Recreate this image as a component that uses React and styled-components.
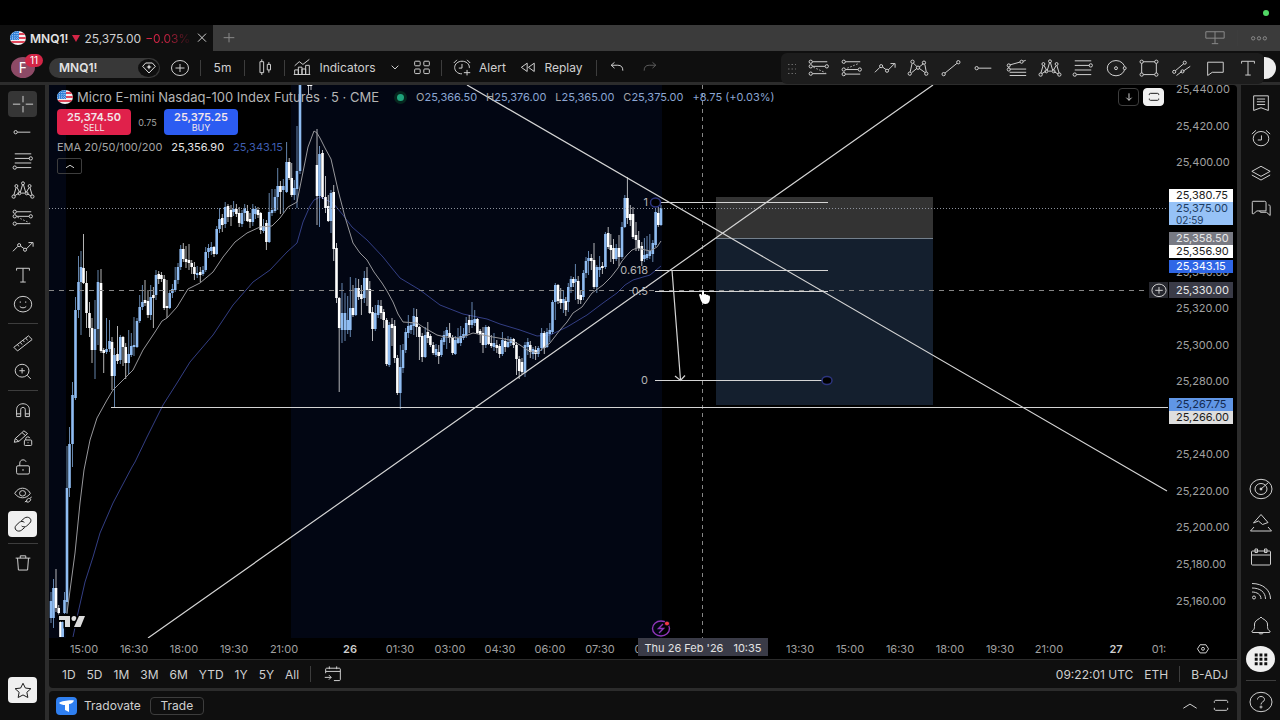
import React from "react";
import styled, { createGlobalStyle, css } from "styled-components";

/* price axis: 25,440 sits 4px under the top edge of the pane, 20 points are 36.5px */
const PANE_HEIGHT = 553;
const PANE_WIDTH = 1119;
const priceToTop = (price) => ((4 + ((25440 - price) * 511.5) / 280) / PANE_HEIGHT) * 100;
const barToLeft = (x) => ((x - 49) / PANE_WIDTH) * 100;

const TICKS = [25440, 25420, 25400, 25340, 25320, 25300, 25280, 25240, 25220, 25200, 25180, 25160];

const TIMES = [
    [84, "15:00"], [134, "16:30"], [184, "18:00"], [234, "19:30"], [284, "21:00"],
    [350, "26", true], [400, "01:30"], [450, "03:00"], [500, "04:30"], [550, "06:00"],
    [600, "07:30"], [650, "09:00"], [800, "13:30"], [850, "15:00"], [900, "16:30"],
    [950, "18:00"], [1000, "19:30"], [1049, "21:00"], [1116, "27", true], [1159, "01:"],
];

const RANGES = ["1D", "5D", "1M", "3M", "6M", "YTD", "1Y", "5Y", "All"];

/* x, high, body top, body bottom, low, up(1) or down(0) */
const CANDLES = [
    [51, 592, 601, 618, 623, 1], [53.5, 579, 588, 618, 628, 1], [56, 569, 588, 608, 612, 0],
    [58.7, 605, 608, 613, 616, 0], [60.5, 620, 622, 637, 637, 0], [62.7, 618, 622, 637, 637, 1],
    [64.5, 592, 600, 613, 614, 1], [67, 446, 488, 602, 614, 1], [69.5, 427, 444, 488, 497, 1],
    [72.5, 382, 395, 444, 467, 1], [75.5, 297, 310, 398, 400, 1], [78.5, 256, 282, 310, 318, 1],
    [81, 251, 267, 282, 335, 1], [83.5, 234, 268, 283, 284, 0], [86.5, 271, 283, 313, 328, 0],
    [89.5, 302, 313, 328, 337, 0], [92, 318, 328, 350, 363, 0], [95, 300, 329, 350, 379, 1],
    [98, 270, 282, 329, 345, 1], [101, 269, 283, 351, 353, 0], [103.7, 348, 350, 353, 373, 0],
    [106.5, 318, 349, 352, 354, 1], [109.5, 320, 341, 349, 352, 1], [112, 337, 342, 376, 390, 0],
    [114.5, 348, 355, 376, 408, 1], [117.5, 326, 354, 361, 364, 0], [120.3, 335, 337, 360, 364, 1],
    [123, 336, 337, 347, 366, 0], [125.7, 343, 347, 363, 379, 0], [128.7, 330, 354, 363, 374, 1],
    [131.3, 333, 346, 355, 357, 1], [134, 317, 345, 347, 356, 1], [137, 318, 321, 347, 348, 1],
    [139.7, 295, 307, 321, 323, 1], [142.4, 285, 302, 307, 310, 1], [145, 280, 300, 303, 306, 0],
    [148, 290, 301, 315, 318, 0], [150.7, 285, 297, 315, 320, 1], [153.4, 287, 295, 298, 328, 0],
    [156, 270, 275, 295, 300, 1], [158.7, 271, 274, 279, 284, 0], [161.4, 272, 275, 279, 282, 0],
    [164.2, 275, 279, 308, 310, 0], [167, 280, 306, 308, 318, 0], [169.7, 290, 293, 308, 309, 1],
    [172.4, 284, 289, 293, 298, 1], [175.2, 267, 280, 290, 292, 1], [178, 263, 267, 280, 284, 1],
    [180.7, 245, 249, 267, 270, 1], [183.3, 243, 249, 259, 262, 0], [186, 246, 259, 262, 268, 0],
    [189, 244, 260, 263, 270, 0], [191.7, 260, 263, 267, 274, 0], [194.4, 262, 267, 274, 280, 0],
    [197.2, 266, 273, 275, 278, 1], [200.3, 267, 272, 275, 282, 0], [203, 266, 270, 274, 276, 1],
    [205.7, 247, 252, 270, 272, 1], [208.5, 244, 248, 252, 258, 1], [211.3, 242, 247, 251, 255, 1],
    [214, 246, 247, 254, 257, 0], [216.7, 226, 229, 254, 255, 1], [219.5, 208, 219, 229, 233, 1],
    [222.3, 214, 218, 225, 232, 0], [225.2, 202, 207, 224, 228, 1], [228, 204, 206, 217, 222, 0],
    [231, 205, 210, 217, 226, 0], [233.6, 201, 209, 212, 216, 1], [236.4, 204, 209, 214, 217, 0],
    [239.2, 207, 213, 223, 227, 0], [242, 210, 213, 224, 227, 1], [244.7, 204, 208, 213, 221, 1],
    [247.4, 205, 211, 221, 222, 0], [250, 213, 219, 222, 228, 0], [252.8, 204, 209, 222, 226, 1],
    [255.4, 206, 209, 214, 219, 1], [258, 207, 210, 215, 218, 0], [260.7, 212, 213, 230, 234, 0],
    [263.5, 219, 226, 231, 233, 1], [266.4, 220, 223, 242, 250, 0], [269.2, 193, 212, 242, 243, 1],
    [272, 189, 210, 213, 216, 1], [275, 189, 197, 211, 213, 1], [277.7, 168, 186, 197, 210, 1],
    [280.4, 181, 186, 192, 214, 0], [283.3, 179, 186, 190, 213, 1], [286.6, 142, 162, 192, 193, 1],
    [289.2, 158, 162, 178, 180, 0], [291.7, 163, 178, 195, 197, 0], [294.3, 180, 188, 195, 200, 1],
    [297, 126, 171, 189, 208, 1], [300, 85, 85, 171, 174, 1], [308.5, 85, 85, 86, 95, 0],
    [311, 85, 85, 86, 90, 0], [317, 129, 165, 196, 225, 0], [319.5, 146, 154, 196, 227, 1],
    [322.5, 150, 153, 197, 199, 0], [325.5, 176, 197, 208, 213, 0], [328.3, 195, 206, 221, 222, 0],
    [331, 190, 193, 221, 233, 1], [333.7, 185, 192, 249, 261, 0], [336.5, 243, 248, 298, 303, 0],
    [339.2, 297, 298, 328, 392, 0], [342, 283, 313, 330, 343, 1], [345, 293, 313, 330, 341, 1],
    [347.7, 296, 320, 330, 334, 1], [350.3, 277, 308, 330, 337, 1], [353, 285, 308, 315, 317, 0],
    [355.8, 278, 288, 315, 316, 1], [358.6, 279, 288, 297, 300, 0], [361.4, 285, 294, 299, 315, 0],
    [364.3, 271, 278, 298, 303, 1], [367, 267, 278, 290, 306, 0], [369.8, 281, 289, 313, 314, 0],
    [372.5, 307, 312, 329, 341, 0], [375.3, 305, 313, 329, 331, 1], [378.2, 300, 305, 315, 318, 1],
    [381, 300, 306, 313, 319, 0], [383.7, 309, 312, 320, 328, 0], [386.6, 318, 320, 364, 366, 0],
    [389.2, 322, 325, 365, 367, 1], [392, 318, 324, 328, 346, 0], [394.7, 320, 326, 358, 363, 0],
    [397.4, 355, 358, 393, 395, 0], [400.3, 345, 367, 393, 409, 1], [403, 344, 350, 368, 373, 1],
    [405.7, 328, 332, 350, 353, 1], [408.3, 315, 326, 333, 338, 1], [411, 322, 325, 330, 334, 1],
    [413.8, 308, 316, 326, 335, 1], [416.6, 309, 317, 327, 337, 0], [419.4, 326, 327, 337, 360, 0],
    [422.2, 333, 336, 357, 362, 0], [425.2, 327, 335, 357, 358, 1], [427.8, 322, 332, 338, 343, 0],
    [430.4, 334, 336, 345, 347, 0], [433.2, 342, 345, 353, 355, 0], [436, 344, 349, 355, 357, 1],
    [438.7, 345, 352, 356, 364, 0], [441.4, 338, 340, 355, 357, 1], [444, 331, 335, 342, 345, 1],
    [446.7, 327, 330, 336, 349, 1], [449.6, 323, 333, 338, 343, 0], [452.6, 335, 337, 353, 355, 0],
    [455.3, 336, 340, 354, 355, 1], [458, 328, 338, 343, 344, 1], [460.7, 326, 336, 343, 346, 1],
    [463.5, 328, 334, 338, 340, 1], [466.2, 317, 323, 336, 338, 1], [469.2, 315, 320, 325, 333, 0],
    [472, 302, 320, 325, 328, 1], [474.7, 310, 319, 323, 326, 1], [477.4, 318, 319, 333, 334, 0],
    [480.2, 329, 331, 335, 343, 0], [483, 327, 333, 345, 353, 0], [485.8, 325, 327, 345, 348, 1],
    [488.6, 326, 327, 344, 345, 0], [491.3, 335, 343, 346, 348, 0], [494, 333, 343, 347, 351, 1],
    [496.8, 340, 345, 348, 353, 0], [499.6, 344, 346, 354, 358, 0], [502.4, 332, 340, 354, 356, 1],
    [505.2, 338, 341, 347, 352, 0], [508, 336, 342, 347, 348, 1], [510.8, 337, 339, 343, 346, 1],
    [513.6, 338, 339, 345, 348, 0], [516.5, 342, 345, 359, 375, 0], [519.2, 356, 359, 371, 379, 0],
    [522, 358, 362, 372, 374, 0], [525, 342, 345, 373, 377, 1], [527.8, 338, 342, 347, 355, 1],
    [530.3, 341, 345, 352, 358, 0], [533, 347, 349, 354, 359, 1], [535.6, 346, 350, 354, 360, 0],
    [538.3, 346, 348, 354, 357, 1], [541.6, 328, 333, 348, 351, 1], [544.3, 331, 333, 348, 354, 0],
    [547, 328, 332, 347, 348, 1], [549.8, 323, 330, 334, 342, 1], [552.5, 300, 302, 332, 334, 1],
    [555.3, 283, 285, 302, 320, 1], [558, 284, 285, 301, 304, 0], [560.7, 288, 299, 303, 309, 0],
    [563.4, 291, 299, 303, 313, 1], [565.8, 297, 301, 310, 316, 0], [568.3, 283, 287, 302, 312, 1],
    [571, 276, 279, 287, 293, 1], [573.4, 277, 279, 283, 287, 0], [575.4, 264, 279, 282, 300, 1],
    [578.2, 276, 281, 299, 304, 0], [580.7, 290, 295, 300, 304, 0], [583.4, 270, 273, 297, 300, 1],
    [586, 257, 261, 273, 278, 1], [588.5, 251, 258, 261, 275, 1], [591.3, 254, 258, 261, 270, 0],
    [594, 243, 260, 287, 289, 0], [596.8, 265, 267, 287, 293, 1], [599.6, 256, 267, 270, 277, 1],
    [602.4, 262, 266, 268, 274, 0], [605.4, 232, 234, 267, 269, 1], [608.2, 227, 233, 247, 249, 0],
    [610.8, 234, 245, 250, 262, 0], [613.5, 239, 248, 259, 264, 0], [616.2, 244, 248, 259, 261, 1],
    [619, 235, 248, 257, 266, 0], [622, 222, 227, 257, 259, 1], [624.8, 195, 198, 227, 228, 1],
    [627.4, 177, 198, 218, 224, 0], [630.3, 205, 214, 220, 226, 0], [633, 207, 214, 237, 239, 0],
    [636, 222, 235, 240, 251, 0], [638.7, 231, 240, 248, 251, 0], [641.8, 242, 246, 261, 266, 0],
    [644.4, 238, 255, 259, 262, 1], [647, 236, 254, 258, 260, 1], [649.8, 234, 251, 256, 259, 1],
    [652.8, 240, 243, 254, 262, 1], [655.6, 209, 212, 245, 247, 1], [658.3, 206, 213, 225, 227, 0],
    [661, 205, 208, 225, 226, 1],
];

const EMA_FAST = "67,613 71,583 75,553 80,503 84,470 90,440 97,418 107,400 113,390 133,370 143,350 155,332 162,321 167,318 177,307 188,289 200,283 213,272 223,257 235,242 247,233 260,227 272,226 280,218 288,207 297,202 302,177 308,147 314,131 317,133 320,138 325,148 331,159 338,190 345,217 353,243 360,253 367,260 374,272 382,283 387,291 393,302 398,314 403,322 417,323 423,327 437,335 445,337 460,338 473,333 483,335 493,337 510,340 520,345 527,350 537,353 550,343 560,330 567,322 573,313 582,307 592,293 603,285 611,277 618,268 622,261 627,255 632,250 637,248 650,251 657,247 661,241";
const EMA_SLOW = "73,637 78,613 85,582 93,557 100,533 113,503 132,467 135,462 147,437 163,405 177,383 190,362 213,335 233,305 253,282 270,270 287,252 297,243 303,222 310,206 314,200 320,197 333,203 343,215 352,227 367,240 383,257 391,267 400,278 420,290 440,305 463,314 487,319 500,324 520,330 537,336 550,335 567,327 587,315 603,303 617,293 625,285 633,280 650,275 661,266";

/* rail and toolbar drawings, all on a 24 x 20 grid */
const ICONS = {
    cross: <path d="M12 1v7M12 12v7M1 10h8M15 10h8" />,
    hline: <><circle cx="4" cy="10" r="1.8" /><path d="M6 10h14" /></>,
    fib: <><path d="M3 2h18M3 7h16M3 12h18M5 17h16" /><circle cx="20.500" cy="7" r="1.8" /><circle cx="3" cy="17" r="1.8" /></>,
    pattern: <><path d="M2 15.500L4.500 7M5.500 7l3 5.500M9 12.500L11.500 4M12.500 4L15 12.500M15.500 12.500l3-5M19.500 7l2.500 8.500M3 16l5-3M10 13.200h4M16 13.500l5 3" /><circle cx="1.800" cy="17" r="1.800" /><circle cx="4.800" cy="5.500" r="1.600" /><circle cx="8" cy="13.500" r="1.600" /><circle cx="12" cy="2.500" r="1.600" /><circle cx="16" cy="13.500" r="1.600" /><circle cx="19.200" cy="5.500" r="1.600" /><circle cx="22.200" cy="17" r="1.800" /></>,
    short: <><path d="M5 3h16M5 8h13.500M5 16h15" /><path d="M6 9l13 6" strokeDasharray="1.500 2" /><circle cx="3" cy="3" r="1.800" /><circle cx="3" cy="8" r="1.800" /><circle cx="20.500" cy="8" r="1.800" /><circle cx="3" cy="16" r="1.800" /></>,
    long: <><path d="M5 3h16M5 11.500h13.500M5 16.500h16" /><path d="M7 10l12-5" strokeDasharray="1.500 2" /><circle cx="3" cy="3" r="1.800" /><circle cx="3" cy="11.500" r="1.800" /><circle cx="20.500" cy="11.500" r="1.800" /><circle cx="3" cy="16.500" r="1.800" /></>,
    trend: <><path d="M1 14.500L6.500 9M9 8.500l4 3M15.500 12L22 5.500M18 5h5v4.500" /><circle cx="7.800" cy="7.800" r="1.700" /><circle cx="14.200" cy="12.800" r="1.700" /></>,
    text: <path d="M5 5V2.500h14V5M12 2.500v15M9 17.500h6" />,
    smile: <><ellipse cx="12" cy="10" rx="9.500" ry="8.500" /><path d="M8.500 12.500c1.500 2 5.500 2 7 0M9 7v1.500M15 7v1.500" /></>,
    ruler: <path d="M2 14.500L18 2l4 4L6 18.500zM6 11.500l1.500 2M9 9l2 2.500M12 6.800l1.500 2M15 4.500L17 7" />,
    zoom: <><ellipse cx="11" cy="9.500" rx="7.500" ry="7" /><path d="M16.500 14.500l4 4M11 6.500v6M8 9.500h6" /></>,
    magnet: <path d="M5 16V9.500C5 5.500 8 3 12 3s7 2.500 7 6.500V17h-4.500V9.500c0-1.500-1-2.500-2.500-2.500s-2.500 1-2.500 2.500V17H5zM5 14h4.500M14.500 14H19" />,
    pencil: <><path d="M2.500 14.500l1-4L13 2l4 3-9.500 8.500zM3.500 10.500l4 3M11 4l3.500 3" /><rect x="13.500" y="12" width="8" height="6" rx="1" /><path d="M15 12v-1.500a2.300 2 0 0 1 4.500-.5M17.500 14.500v1" /></>,
    lock: <><rect x="5" y="8.500" width="14" height="9" rx="1.500" /><path d="M8.500 8.500V5.500C8.500 3.500 10 2 12 2c1.500 0 2.800.8 3.300 2M12 12v2" /></>,
    eye: <><path d="M3 8c4-7.500 13-7.500 17 0-4 6.500-13 6.500-17 0z" /><ellipse cx="11.500" cy="8" rx="3.300" ry="3" /><path d="M14 17.500l2-1.500M16 15l2-1.500c2 0 3 1 2 2.500l-2 1.500h-2zM19.500 13.500l2-1.500" /></>,
    link: <path d="M10 6.500l3.500-3c2-1.600 4.500-1.300 6 0s1.500 3.800 0 5.200L16 12c-1.700 1.300-4 1.300-5.500 0M14 13.500l-3.500 3c-2 1.600-4.500 1.300-6 0s-1.500-3.800 0-5.200L8 8c1.700-1.300 4-1.300 5.500 0" />,
    trash: <path d="M4 4.500h16M9 4.500V2h6v2.500M6 4.500l1 13h10l1-13" />,
    star: <path d="M12 2.500l2.600 5.200 6 .7-4.400 3.900 1.100 5.700-5.300-2.800L6.700 18l1.100-5.700-4.400-3.900 6-.7z" />,
    xabcd: <><path d="M3.500 14L5.500 5M7 4.500l4 4M13 9l5-4M19.500 6l1.500 8M5 15l6-5M13 10l7 5" /><circle cx="3" cy="16" r="1.800" /><circle cx="6" cy="3" r="1.800" /><circle cx="12" cy="9.500" r="1.800" /><circle cx="18.500" cy="4" r="1.800" /><circle cx="21" cy="16" r="1.800" /></>,
    line: <><circle cx="4" cy="16.500" r="1.800" /><circle cx="20" cy="3.500" r="1.800" /><path d="M5.500 15.300L18.500 4.700" /></>,
    fan: <><path d="M4 6.500L15.500 3.300M18.500 2.500l3-1M4 11h18M4 14.500h18M4 18h18M3 8.500v1.500" /><circle cx="3" cy="7" r="1.700" /><circle cx="17" cy="3" r="1.700" /><circle cx="3" cy="11.500" r="1.700" /></>,
    circle: <><ellipse cx="12" cy="10" rx="9.500" ry="8.300" /><circle cx="12" cy="10" r="1.600" /><circle cx="21.500" cy="10" r="1.600" fill="#1c1c1c" /></>,
    rect: <><rect x="4" y="3" width="16" height="14" /><g fill="#1c1c1c"><circle cx="4" cy="3" r="1.800" /><circle cx="20" cy="3" r="1.800" /><circle cx="4" cy="17" r="1.800" /><circle cx="20" cy="17" r="1.800" /></g></>,
    channel: <><path d="M4.500 13L14 5M13 13.500L21 8M6 18l6-4.500" /><circle cx="3.500" cy="14" r="1.700" /><circle cx="15" cy="4" r="1.700" /><circle cx="12.500" cy="13.500" r="1.700" /></>,
    bubble: <path d="M4 3.500h17v11H9l-5 3.500z" />,
    plusCircle: <><ellipse cx="12" cy="10" rx="8.500" ry="7.500" /><path d="M12 6v8M7.500 10h9" /></>,
    candles: <path d="M6.500 4h4v12h-4zM8.500 1.500V4M8.500 16v2.500M14.500 7h3.500v6h-3.500zM16.200 4.500V7M16.200 13v3" />,
    indicators: <path d="M4 18v-5h4v5M8 18V10h4v8M12 18v-6h4v6M16 18V8h4v10M3 18h18M4 8.500l5-4.500 4 3 7-5.500" />,
    grid4: <><rect x="4" y="3.500" width="6" height="5" rx="1" /><rect x="14" y="3.500" width="6" height="5" rx="1" /><rect x="4" y="12" width="6" height="5" rx="1" /><rect x="14" y="12" width="6" height="5" rx="1" /></>,
    alert: <path d="M12 17.300C7 17.300 4 14 4 10.300S7.500 3.500 12 3.500s8 3 8 6.500v1M3 5.500l3.500-3.500M17.500 2L21 5.500M12 6.500v4.500H8.500M17.500 13v6M14 16h7" />,
    replay: <path d="M11 5v10l-7-5zM19.500 5v10l-7-5z" />,
    undo: <path d="M9 4L5 7.500l4 3.500M5 7.500h8c4 0 6 2 6 6.500" />,
    redo: <path d="M15 4l4 3.500-4 3.500M19 7.500h-8c-4 0-6 2-6 6.500" />,
    chevron: <path d="M8 8l4 4 4-4" />,
    up: <path d="M4 13.500l8-5 8 5" />,
    frame: <path d="M4 7V5.500C4 4.500 5 4 6 4h12c1 0 2 .5 2 1.500V7M4 13v1.500C4 15.500 5 16 6 16h12c1 0 2-.5 2-1.500V13" />,
    goTo: <path d="M4 9V4.500C4 4 4.500 3.500 5 3.500h14c.5 0 1 .5 1 1V16c0 .500-.5 1-1 1h-6M4 7h16M8 1.500v3M16 1.500v3M3 13.500h7M7.500 11l2.500 2.500L7.500 16" />,
    list: <path d="M4 2h16v16l-8-3-8 3zM7.500 5.500h9M7.500 8.500h9M7.500 11.500h9" />,
    clock: <><ellipse cx="12" cy="10.500" rx="8.500" ry="7.800" /><path d="M2 5.500L6.500 1.500M17.500 1.500L22 5.500M12.500 7v5H8.500" /></>,
    layers: <path d="M12 2.500l10 5.500-10 5.500L2 8zM2 12l10 5.500L22 12" />,
    chat: <path d="M3 2.500h13c1 0 1.500.5 1.500 1.500v9h-10L4 16H2.500V4c0-1 0-1.500.5-1.500zM20 6.500c1.500 0 2 .5 2 1.500v10l-4-3.500h-6c-1 0-1.500-.5-1.500-1.500" />,
    radar: <><ellipse cx="12" cy="10" rx="11" ry="9.700" /><ellipse cx="12" cy="10" rx="6" ry="5.500" /><path d="M12 10l7.500-6.500" /><circle cx="12" cy="10" r="1" fill="#dbdbdb" /></>,
    mountain: <path d="M5 14l-3.500 4h21L19 14M12 1.500L4.500 10l5-2 4 3.500 5.500-2z" />,
    calendar: <path d="M3.500 4h17c.7 0 1 .4 1 1v12c0 .6-.3 1-1 1h-17c-.7 0-1-.4-1-1V5c0-.6.3-1 1-1zM2.500 8h19M6 2h2.500v3.500H6zM15.500 2H18v3.500h-2.500z" />,
    rss: <><path d="M3 2.500C14 2.500 21.500 9 21.500 18M3 7c8 0 13.500 4 13.500 11M3 11c5 0 9 2.500 9 7" /><circle cx="5" cy="16.500" r="1.500" /></>,
    bell: <path d="M4 15.500c1-1 1.500-2 1.500-4V9c0-2.500 3-4.500 5-5.500L12 2l1.500 1.500c2 1 5 3 5 5.500v2.500c0 2 .5 3 1.500 4 1.500.5 1.500 2 0 2H4c-1.500 0-1.500-1.500 0-2zM9.500 17.800c.8 1.500 4.200 1.500 5 0" />,
    dots9: <g fill="#0f0f0f" stroke="none"><path d="M4.500 3h3.500v3.500H4.500zM10.200 3h3.500v3.500h-3.500zM16 3h3.500v3.500H16zM4.500 8.200h3.500v3.500H4.500zM10.200 8.200h3.500v3.500h-3.500zM16 8.200h3.500v3.500H16zM4.500 13.500h3.500V17H4.500zM10.200 13.500h3.500V17h-3.500zM16 13.500h3.500V17H16z" /></g>,
    help: <><ellipse cx="12" cy="10" rx="11" ry="9.700" /><path d="M8.500 7.500c0-4 7-4 7 0 0 2.500-3.500 2-3.500 5" /><circle cx="12" cy="15" r="1" /></>,
    down: <path d="M12 4v12M7.500 11.500L12 16l4.500-4.500" />,
    diamond: <><path d="M2.500 8L7 3h10l4.500 5L12 18z" /><path d="M12 5l1.300 2.700L16 9l-2.700 1.300L12 13l-1.300-2.700L8 9l2.700-1.300z" fill="#dbdbdb" stroke="none" /></>,
    hex: <><path d="M7 3h10l4.500 7-4.500 7H7l-4.500-7z" /><circle cx="12" cy="10" r="2.500" /></>,
    close: <path d="M6 4l12 12M18 4L6 16" />,
    plus: <path d="M12 3v14M4 10h16" />,
    layout: <path d="M2 3h20v7H2zM12 3v13M8.500 16h7" />,
    more: <><circle cx="5" cy="10" r="2" /><circle cx="12" cy="10" r="2" /><circle cx="19" cy="10" r="2" /></>,
};

const LEFT_TOOLS = [
    ["cross", "hline", "fib", "pattern", "short", "trend", "text", "smile"],
    ["ruler", "zoom"],
    ["magnet", "pencil", "lock", "eye", "link"],
];
const LEFT_HEIGHTS = [226, 54, 140];

const FAVORITES = ["short", "long", "trend", "xabcd", "line", "hline", "fan", "pattern", "fib", "circle", "rect", "channel", "bubble", "text"];

const Icon = ({ name, size = 22 }) => (
    <IconSvg viewBox="0 0 24 20" $size={size} aria-hidden="true">{ICONS[name]}</IconSvg>
);

const Flag = () => (
    <FlagSvg viewBox="0 0 16 14" aria-hidden="true">
        <clipPath id="flag"><ellipse cx="8" cy="7" rx="8" ry="7" /></clipPath>
        <g clipPath="url(#flag)">
            <rect width="16" height="14" fill="#f3f3f3" />
            <path d="M8 2h8v2H8zM8 6h8v2H8zM0 10h16v2H0z" fill="#e0465a" />
            <rect width="9" height="9" fill="#2f7fd6" />
            <path d="M0 2.500h9M0 5h9M0 7.500h9M2.500 0v9M5 0v9M7.500 0v9" stroke="#a9cdf3" strokeWidth=".7" strokeDasharray="1 1" />
        </g>
    </FlagSvg>
);

const Chart = () => (
    <ChartSvg viewBox="49 85 1119 553" preserveAspectRatio="none" role="img" aria-label="MNQ1! 5 minute chart">
        <rect x="49" y="85" width="17" height="553" fill="#020613" />
        <rect x="291" y="85" width="371" height="553" fill="#020613" />
        <rect x="716" y="197" width="217" height="41" fill="#333333" />
        <rect x="716" y="238" width="217" height="167" fill="#141f2e" />
        <path d="M716 238.500h217" stroke="#74808c" />

        <polyline points={EMA_SLOW} fill="none" stroke="#333e84" />
        {CANDLES.map(([x, high, top, bottom, low, up]) => (
            <g key={x} fill={up ? "#8fbcf2" : "#ffffff"}>
                <rect x={x - 0.5} y={high} width="1" height={low - high} opacity=".7" />
                <rect x={x - 1.3} y={top} width="2.600" height={bottom - top} />
            </g>
        ))}
        <polyline points={EMA_FAST} fill="none" stroke="#97979b" />

        <path d="M49 208.500H1168" stroke="#8d929c" strokeDasharray="1 2" />
        <path d="M49 290.500H1168" stroke="#868686" strokeDasharray="5 5" />
        <path d="M702.500 85V638" stroke="#868686" strokeDasharray="4 4" />

        <g stroke="#d4d4d4" strokeWidth="1.200" fill="none">
            <path d="M111 407.500H1168" />
            <path d="M148 638L933 85M467 85L1167 491" />
            <path d="M655 202.500h173M655 270.500h173M655 291.500h173M655 380.500h173" />
            <path d="M672 270l8.500 110M675 376l5.500 4.500 4.500-5" />
        </g>
        <g fill="#000" stroke="#2d357f" strokeWidth="1.500">
            <ellipse cx="655.500" cy="202.500" rx="5" ry="4.500" />
            <ellipse cx="827" cy="380.500" rx="5" ry="4" />
        </g>
        <FibText x="648" y="206">1</FibText>
        <FibText x="648" y="274">0.618</FibText>
        <FibText x="648" y="295">0.5</FibText>
        <FibText x="648" y="384">0</FibText>

        <path d="M699 294.500c1-1 2.500-.5 3 1v-4c0-1.500 2-1.500 2 0v3c1-.7 2-.4 2.300.4 1-.5 1.800 0 2 .7 1-.3 1.700.3 1.700 1.500 0 4-1 6.900-4.500 6.900-3 0-4-2-5-4.500z" fill="#fff" />
        <g fill="none" stroke="#8e35b8" strokeWidth="1.400">
            <ellipse cx="661" cy="628.500" rx="8.500" ry="7.500" />
            <path d="M663 624l-4.500 4.500h5l-4.500 4.500" />
        </g>
        <circle cx="667" cy="623.500" r="2.500" fill="#f23645" stroke="#020613" />
        <g fill="#dcdcdc" stroke="#000" strokeWidth="3" paintOrder="stroke">
            <path d="M59 616h11v11h-5v-7h-6z" />
            <circle cx="74" cy="618.500" r="2.500" />
            <path d="M79 616h6l-4.500 11H74z" />
        </g>
    </ChartSvg>
);

const App = () => (
    <Page>
        <Global />
        <MenuStrip><CameraDot /></MenuStrip>

        <TabBar>
            <Tab>
                <Flag />
                <TabName>MNQ1!</TabName>
                <DownMark viewBox="0 0 8 7" aria-hidden="true"><path d="M0 0h8L4 7z" fill="#d32546" /></DownMark>
                <span>25,375.00</span>
                <TabChange>−0.03%</TabChange>
                <PlainButton aria-label="Close tab"><Icon name="close" size={16} /></PlainButton>
            </Tab>
            <PlainButton $dim aria-label="New tab"><Icon name="plus" size={16} /></PlainButton>
            <Spacer />
            <TabActions>
                <PlainButton $dim aria-label="Layout"><Icon name="layout" /></PlainButton>
                <Divider />
                <PlainButton $dim aria-label="More"><Icon name="more" size={20} /></PlainButton>
            </TabActions>
        </TabBar>

        <Toolbar>
            <Avatar type="button">F<Badge>11</Badge></Avatar>
            <SymbolButton type="button">MNQ1!<Gem><Icon name="diamond" size={16} /></Gem></SymbolButton>
            <ToolButton $w={40} aria-label="Compare"><Icon name="plusCircle" size={24} /></ToolButton>
            <Divider />
            <ToolButton $w={43}>5m</ToolButton>
            <Divider />
            <ToolButton $w={39} aria-label="Bar style"><Icon name="candles" /></ToolButton>
            <Divider />
            <ToolButton $w={97}><Icon name="indicators" />Indicators</ToolButton>
            <ToolButton $w={26} aria-label="Favorite indicators"><Icon name="chevron" size={20} /></ToolButton>
            <ToolButton $w={28} aria-label="Templates"><Icon name="grid4" /></ToolButton>
            <Divider $gap={5} />
            <ToolButton $w={63}><Icon name="alert" />Alert</ToolButton>
            <ToolButton $w={81}><Icon name="replay" size={20} />Replay</ToolButton>
            <Divider $gap={5} />
            <ToolButton $w={30} aria-label="Undo"><Icon name="undo" size={20} /></ToolButton>
            <ToolButton $w={36} $dim aria-label="Redo"><Icon name="redo" size={20} /></ToolButton>
            <Spacer />
            <Favorites>
                <Grip viewBox="0 0 8 10" aria-hidden="true"><path d="M0 .5h8M0 5h8M0 9.500h8" stroke="#6b6b6b" strokeDasharray="1.500 2" /></Grip>
                {FAVORITES.map((name) => (
                    <FavButton key={name} aria-label={name}><Icon name={name} /></FavButton>
                ))}
            </Favorites>
            <Publish aria-label="Publish" />
        </Toolbar>

        <Body>
            <LeftRail>
                {LEFT_TOOLS.map((group, i) => (
                    <React.Fragment key={group[0]}>
                        <RailGroup $h={LEFT_HEIGHTS[i]}>
                            {group.map((name) => (
                                <RailButton key={name} aria-label={name} $soft={name === "cross"} $lit={name === "link"}>
                                    <Icon name={name} />
                                </RailButton>
                            ))}
                        </RailGroup>
                        <RailLine />
                    </React.Fragment>
                ))}
                <RailButton aria-label="Remove"><Icon name="trash" /></RailButton>
                <Spacer />
                <RailButton $lit aria-label="Favorites"><Icon name="star" /></RailButton>
            </LeftRail>

            <Center>
                <ChartPanel>
                    <Pane>
                        <Chart />
                        <Legend>
                            <LegendRow>
                                <Flag />
                                <Title>Micro E-mini Nasdaq-100 Index Futures · 5 · CME</Title>
                                <MarketDot />
                                <Ohlc>
                                    <span><i>O</i>25,366.50</span>
                                    <span><i>H</i>25,376.00</span>
                                    <span><i>L</i>25,365.00</span>
                                    <span><i>C</i>25,375.00</span>
                                    <span>+8.75 (+0.03%)</span>
                                </Ohlc>
                            </LegendRow>
                            <OrderRow>
                                <OrderButton $color="#e0214b"><b>25,374.50</b>SELL</OrderButton>
                                <Spread>0.75</Spread>
                                <OrderButton $color="#2c5cf2"><b>25,375.25</b>BUY</OrderButton>
                            </OrderRow>
                            <EmaRow>
                                <span>EMA 20/50/100/200</span>
                                <EmaValue $color="#e6e6e6">25,356.90</EmaValue>
                                <EmaValue $color="#3f5eb0">25,343.15</EmaValue>
                            </EmaRow>
                            <Collapse aria-label="Collapse legend"><Icon name="up" size={12} /></Collapse>
                        </Legend>
                        <PaneButtons>
                            <PaneButton aria-label="Scroll down"><Icon name="down" size={14} /></PaneButton>
                            <PaneButton $lit aria-label="Fit"><Icon name="frame" size={14} /></PaneButton>
                        </PaneButtons>
                        <AddMark type="button" aria-label="Add at price" style={{ top: `${priceToTop(25330)}%` }}>
                            <Icon name="plusCircle" size={20} />
                        </AddMark>
                    </Pane>

                    <PriceAxis>
                        {TICKS.map((price) => (
                            <Tick key={price} style={{ top: `${priceToTop(price)}%` }}>
                                {price.toLocaleString("en-US", { minimumFractionDigits: 2 })}
                            </Tick>
                        ))}
                        <TagStack style={{ top: `${priceToTop(25385.2)}%` }}>
                            <Tag $bg="#ffffff" $fg="#1b1b1b">25,380.75</Tag>
                            <Tag $bg="#96c2f7" $fg="#1d3c63">25,375.00<small>02:59</small></Tag>
                        </TagStack>
                        <TagStack style={{ top: `${priceToTop(25361.8)}%` }}>
                            <Tag $bg="#787a83" $fg="#e8e8e8">25,358.50</Tag>
                            <Tag $bg="#ffffff" $fg="#1b1b1b">25,356.90</Tag>
                        </TagStack>
                        <TagStack style={{ top: `${priceToTop(25346.4)}%` }}>
                            <Tag $bg="#2f66e6" $fg="#ffffff">25,343.15</Tag>
                        </TagStack>
                        <TagStack style={{ top: `${priceToTop(25334.2)}%` }}>
                            <Tag $bg="#3a3b47" $fg="#e8e8e8" $tall>25,330.00</Tag>
                        </TagStack>
                        <TagStack style={{ top: `${priceToTop(25270.9)}%` }}>
                            <Tag $bg="#6096e6" $fg="#132a52">25,267.75</Tag>
                            <Tag $bg="#dedede" $fg="#1b1b1b">25,266.00</Tag>
                        </TagStack>
                    </PriceAxis>

                    <TimeAxis>
                        {TIMES.map(([x, label, day]) => (
                            <TimeLabel key={x} $day={day} style={{ left: `${barToLeft(x)}%` }}>{label}</TimeLabel>
                        ))}
                        <CursorTime style={{ left: `${barToLeft(703)}%` }}><span>Thu 26 Feb '26</span><span>10:35</span></CursorTime>
                    </TimeAxis>
                    <AxisCorner>
                        <PlainButton aria-label="Axis settings"><Icon name="hex" size={14} /></PlainButton>
                    </AxisCorner>
                </ChartPanel>

                <RangeBar>
                    {RANGES.map((range) => <RangeButton key={range}>{range}</RangeButton>)}
                    <Divider />
                    <PlainButton aria-label="Go to date"><Icon name="goTo" /></PlainButton>
                    <Spacer />
                    <RangeButton>09:22:01 UTC</RangeButton>
                    <RangeButton>ETH</RangeButton>
                    <Divider />
                    <RangeButton>B-ADJ</RangeButton>
                </RangeBar>

                <BrokerBar>
                    <BrokerLogo viewBox="0 0 21 18" aria-hidden="true">
                        <rect width="21" height="18" rx="4" fill="#2f7ff0" />
                        <path d="M3 6c3-2 10-3 15-2.500-1 2-2.500 3.500-5 3.500V15L9 13V8C7 8 4.500 7.500 3 6z" fill="#fff" />
                    </BrokerLogo>
                    <span>Tradovate</span>
                    <TradeButton>Trade</TradeButton>
                    <Spacer />
                    <PlainButton aria-label="Open panel"><Icon name="up" size={20} /></PlainButton>
                    <PlainButton aria-label="Maximize panel"><Icon name="frame" size={20} /></PlainButton>
                </BrokerBar>
            </Center>

            <RightRail>
                {["list", "clock", "layers", "chat"].map((name) => (
                    <RailButton key={name} aria-label={name}><Icon name={name} /></RailButton>
                ))}
                <Spacer />
                <RightLower>
                    {["radar", "mountain", "calendar", "rss", "bell"].map((name) => (
                        <RailButton key={name} aria-label={name}><Icon name={name} size={24} /></RailButton>
                    ))}
                    <RailButton $lit $round aria-label="Apps"><Icon name="dots9" size={20} /></RailButton>
                </RightLower>
                <RailLine />
                <RailButton aria-label="Help"><Icon name="help" size={24} /></RailButton>
            </RightRail>
        </Body>
    </Page>
);

export default App;


const Global = createGlobalStyle`
    * {
        box-sizing: border-box;
    }
    body {
        margin: 0;
        background: #000;
        color: #cfcfcf;
        font-family: Inter, "Liberation Sans", sans-serif;
    }
    button {
        font: inherit;
        color: inherit;
        background: none;
        border: 0;
        padding: 0;
        cursor: pointer;
    }
`

const Page = styled.div`
    min-height: 100vh;
    display: flex;
    flex-direction: column;
    background: #0f0f0f;
    overflow: hidden;
`

const Spacer = styled.div`
    flex: 1;
`

const IconSvg = styled.svg`
    width: ${(p) => p.$size}px;
    aspect-ratio: 24 / 20;
    flex: none;
    fill: none;
    stroke: currentColor;
    stroke-width: ${(p) => 24 / p.$size}px;
    overflow: visible;
`

const FlagSvg = styled.svg`
    width: 16px;
    height: 14px;
    flex: none;
`

const Divider = styled.div`
    width: 1px;
    height: 16px;
    flex: none;
    margin: 0 ${(p) => p.$gap || 0}px;
    background: #3d3d3d;
`

const PlainButton = styled.button`
    display: flex;
    align-items: center;
    color: ${(p) => (p.$dim ? "#8a8a8a" : "#cfcfcf")};
`

const MenuStrip = styled.div`
    height: 25px;
    background: #000;
    display: flex;
    align-items: center;
    justify-content: flex-end;
    padding-right: 11px;
`

const CameraDot = styled.span`
    width: 6px;
    height: 6px;
    border-radius: 50%;
    background: #51d865;
`

const TabBar = styled.div`
    height: 26px;
    display: flex;
    align-items: center;
    background: #3b3b3b;
`

const Tab = styled.div`
    width: 213px;
    height: 26px;
    padding: 0 4px 0 10px;
    margin-right: 8px;
    display: flex;
    align-items: center;
    gap: 4px;
    background: #0f0f0f;
    font-size: 12px;
    white-space: nowrap;
    flex: none;

    button {
        margin-left: auto;
    }
`

const TabName = styled.strong`
    font-weight: 600;
    color: #e3e3e3;
`

const DownMark = styled.svg`
    width: 8px;
    height: 7px;
    flex: none;
`

const TabChange = styled.span`
    color: transparent;
    background: linear-gradient(90deg, #d32546 40%, #2b1015);
    background-clip: text;
`

const TabActions = styled.div`
    display: flex;
    align-items: center;
    gap: 11px;
    padding-right: 11px;
`

const Toolbar = styled.div`
    height: 34px;
    padding-left: 11px;
    display: flex;
    align-items: center;
    border-bottom: 3px solid #2c2c2c;
    padding-top: 2px;
    font-size: 12px;
    flex: none;
`

const Avatar = styled.button`
    position: relative;
    width: 24px;
    height: 21px;
    margin-right: 14px;
    border-radius: 50%;
    background: #8d4a66;
    color: #fff;
    font-size: 14px;
    line-height: 20px;
    flex: none;
`

const Badge = styled.span`
    position: absolute;
    left: 14px;
    top: -3px;
    width: 18px;
    height: 13px;
    border-radius: 7px;
    background: #d32546;
    font-size: 10px;
    line-height: 13px;
`

const SymbolButton = styled.button`
    width: 111px;
    height: 20px;
    padding: 0 1px 0 10px;
    display: flex;
    align-items: center;
    justify-content: space-between;
    border-radius: 10px;
    background: #383838;
    font-weight: 600;
    color: #e3e3e3;
    flex: none;
`

const Gem = styled.span`
    width: 21px;
    height: 18px;
    display: grid;
    place-items: center;
    border-radius: 50%;
    background: #0f0f0f;
`

const ToolButton = styled.button`
    width: ${(p) => p.$w}px;
    height: 26px;
    display: flex;
    align-items: center;
    justify-content: center;
    gap: 6px;
    flex: none;
    color: ${(p) => (p.$dim ? "#5a5a5a" : "#cfcfcf")};
`

const Favorites = styled.div`
    height: 31px;
    display: flex;
    align-items: center;
    padding: 0 0 0 7px;
    border-radius: 6px;
    background: #1c1c1c;
    align-self: flex-start;
    flex: none;
`

const Grip = styled.svg`
    width: 8px;
    height: 10px;
    margin-right: 6px;
`

const FavButton = styled.button`
    width: 33px;
    height: 26px;
    display: grid;
    place-items: center;
`

const Publish = styled.button`
    width: 12px;
    height: 22px;
    margin-right: 4px;
    border-radius: 0 11px 11px 0;
    background: #ededed;
    flex: none;
`

const Body = styled.div`
    flex: 1;
    display: flex;
    gap: 4px;
    background: #2c2c2c;
`

const LeftRail = styled.nav`
    width: 45px;
    padding: 6px 0 17px;
    display: flex;
    flex-direction: column;
    align-items: center;
    background: #0f0f0f;
`

const RailGroup = styled.div`
    height: ${(p) => p.$h}px;
    display: flex;
    flex-direction: column;
    justify-content: space-between;
`

const RailLine = styled.div`
    width: 30px;
    height: 1px;
    margin: 6px 0;
    background: #3d3d3d;
    flex: none;
`

const RailButton = styled.button`
    width: 29px;
    height: 26px;
    display: grid;
    place-items: center;
    border-radius: ${(p) => (p.$round ? "50%" : "4px")};
    flex: none;
    ${(p) => p.$soft && css`
        background: #363636;
    `}
    ${(p) => p.$lit && css`
        background: #f0f0f0;
        color: #1b1b1b;
    `}
`

const RightRail = styled(LeftRail)`
    width: 39px;
    gap: 9px;
    padding: 5px 0;

    ${RailLine} {
        margin: -1px 0;
    }
`

const RightLower = styled.div`
    display: flex;
    flex-direction: column;
    gap: 8px;
`

const Center = styled.main`
    flex: 1;
    min-width: 0;
    display: flex;
    flex-direction: column;
`

const ChartPanel = styled.section`
    flex: 1;
    display: grid;
    grid-template-columns: 1fr 69px;
    grid-template-rows: 1fr 21px;
    background: #000;
    border-radius: 4px 4px 0 0;
`

const Pane = styled.div`
    position: relative;
    overflow: hidden;
`

const ChartSvg = styled.svg`
    position: absolute;
    inset: 0;
    width: 100%;
    height: 100%;
`

const FibText = styled.text`
    fill: #b5b5b5;
    font-size: 11px;
    text-anchor: end;
`

const Legend = styled.div`
    position: relative;
    padding: 3px 0 0 8px;
    display: flex;
    flex-direction: column;
    align-items: flex-start;
`

const LegendRow = styled.div`
    height: 18px;
    display: flex;
    align-items: center;
    gap: 4px;
    white-space: nowrap;
`

const Title = styled.h1`
    margin: 0;
    font-size: 13px;
    font-weight: 400;
    color: #b5b5b5;
`

const MarketDot = styled.span`
    width: 7px;
    height: 7px;
    margin: 0 8px 0 14px;
    border-radius: 50%;
    background: #1fa37c;
    box-shadow: 0 0 0 3px #06261e;
`

const Ohlc = styled.div`
    display: flex;
    gap: 9px;
    font-size: 11px;
    color: #8ba6d3;

    i {
        font-style: normal;
        color: #a5a5a5;
    }
`

const OrderRow = styled.div`
    margin-top: 3px;
    display: flex;
    align-items: center;
`

const OrderButton = styled.button`
    width: 74px;
    height: 26px;
    display: flex;
    flex-direction: column;
    align-items: center;
    justify-content: center;
    border-radius: 4px;
    background: ${(p) => p.$color};
    color: #f3e6ea;
    font-size: 9px;
    line-height: 10px;

    b {
        font-size: 11px;
        line-height: 11px;
        font-weight: 600;
    }
`

const Spread = styled.span`
    width: 33px;
    text-align: center;
    font-size: 9px;
    color: #a5a5a5;
`

const EmaRow = styled.div`
    margin-top: 3px;
    height: 18px;
    display: flex;
    align-items: center;
    gap: 9px;
    font-size: 11px;
    color: #a5a5a5;
`

const EmaValue = styled.span`
    color: ${(p) => p.$color};
`

const Collapse = styled.button`
    width: 25px;
    height: 16px;
    margin-top: 2px;
    display: grid;
    place-items: center;
    border: 1px solid #3d3d3d;
    border-radius: 2px;
`

const PaneButtons = styled.div`
    position: absolute;
    top: 3px;
    right: 4px;
    display: flex;
    gap: 4px;
`

const PaneButton = styled.button`
    width: 21px;
    height: 18px;
    display: grid;
    place-items: center;
    border-radius: 4px;
    border: 1px solid ${(p) => (p.$lit ? "#f0f0f0" : "#3d3d3d")};
    background: ${(p) => (p.$lit ? "#f0f0f0" : "#000")};
    color: ${(p) => (p.$lit ? "#1b1b1b" : "#cfcfcf")};
`

const AddMark = styled.button`
    position: absolute;
    right: 0;
    width: 19px;
    height: 16px;
    display: grid;
    place-items: center;
    background: #26272e;
    transform: translateY(-50%);
`

const PriceAxis = styled.div`
    position: relative;
    font-size: 11px;
`

const Tick = styled.span`
    position: absolute;
    left: 8px;
    line-height: 14px;
    transform: translateY(-50%);
    color: #a0a0a0;
`

const TagStack = styled.div`
    position: absolute;
    left: 1px;
    width: 64px;
`

const Tag = styled.div`
    padding-left: 7px;
    line-height: ${(p) => (p.$tall ? 16 : 13)}px;
    background: ${(p) => p.$bg};
    color: ${(p) => p.$fg};

    small {
        display: block;
        font-size: 10px;
        line-height: 10px;
    }
`

const TimeAxis = styled.div`
    position: relative;
    overflow: hidden;
    font-size: 11px;
`

const TimeLabel = styled.span`
    position: absolute;
    top: 4px;
    line-height: 14px;
    transform: translateX(-50%);
    color: ${(p) => (p.$day ? "#cfcfcf" : "#a0a0a0")};
    font-weight: ${(p) => (p.$day ? 600 : 400)};
`

const CursorTime = styled.div`
    position: absolute;
    top: 0;
    width: 130px;
    height: 18px;
    display: flex;
    align-items: center;
    justify-content: center;
    gap: 10px;
    padding-top: 2px;
    transform: translateX(-50%);
    background: #3a3b47;
    color: #e3e3e3;
    white-space: nowrap;
`

const AxisCorner = styled.div`
    display: grid;
    place-items: center;
`

const RangeBar = styled.div`
    height: 29px;
    padding: 0 9px 0 13px;
    display: flex;
    align-items: center;
    gap: 11px;
    background: #0f0f0f;
    border-top: 1px solid #2c2c2c;
    border-radius: 0 0 4px 4px;
`

const RangeButton = styled.button`
    font-size: 12px;
`

const BrokerBar = styled.div`
    height: 29px;
    margin-top: 3px;
    padding: 0 6px 0 7px;
    display: flex;
    align-items: center;
    gap: 7px;
    background: #0f0f0f;
    border-radius: 4px 4px 0 0;
    font-size: 12px;

    ${PlainButton} {
        margin-left: 4px;
    }
`

const BrokerLogo = styled.svg`
    width: 21px;
    height: 18px;
`

const TradeButton = styled.button`
    width: 54px;
    height: 18px;
    margin-left: 2px;
    border: 1px solid #3d3d3d;
    border-radius: 4px;
`
